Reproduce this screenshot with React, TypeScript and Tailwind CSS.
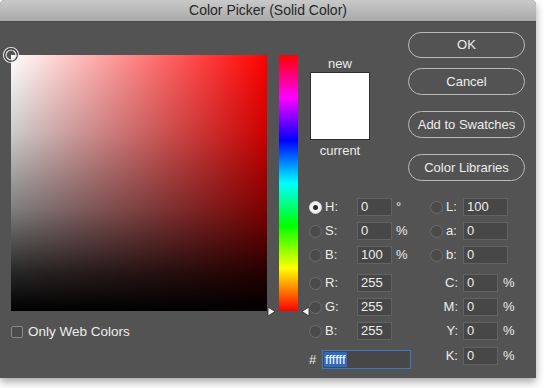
import React from 'react'

const font = { fontFamily: '"Liberation Sans", Arial, sans-serif' }

function Radio({ on }: { on?: boolean }) {
  return on ? (
    <span className="flex w-[13px] h-[13px] shrink-0 items-center justify-center rounded-full bg-[#f0f0f0] border border-[#d8d8d8]">
      <span className="w-[5px] h-[5px] rounded-full bg-[#2a2a2a]" />
    </span>
  ) : (
    <span className="block w-[13px] h-[13px] shrink-0 rounded-full bg-[#4b4b4b] border border-[#6c6c6c]" />
  )
}

function Field({ value, w }: { value: string; w: string }) {
  return (
    <div className={`${w} h-[18px] shrink-0 bg-[#474747] border border-[#626262] pl-[3px] text-[13px] leading-[16px] text-[#ececec]`}>
      {value}
    </div>
  )
}

function Btn({ label, h, mt }: { label: string; h: string; mt: string }) {
  return (
    <div className={`${h} ${mt} w-[117px] flex items-center justify-center rounded-full border border-[#b9b9b9] text-[13px] text-[#ededed]`}>
      {label}
    </div>
  )
}

// left part of a fields row: radio + label + input + unit
function LeftCell({ on, label, value, unit }: { on?: boolean; label: string; value: string; unit: string }) {
  return (
    <div className="flex items-center w-[121px]">
      <Radio on={on} />
      <span className="ml-[3px] w-[32px] text-[13px] text-[#ececec]">{label}</span>
      <Field value={value} w="w-[35px]" />
      <span className="ml-[4px] text-[13px] text-[#ececec]">{unit}</span>
    </div>
  )
}

function LabCell({ label, value }: { label: string; value: string }) {
  return (
    <div className="flex items-center">
      <Radio />
      <span className="ml-[3px] w-[17px] text-[13px] text-[#ececec]">{label}</span>
      <Field value={value} w="w-[45px]" />
    </div>
  )
}

function CmykCell({ label, value }: { label: string; value: string }) {
  return (
    <div className="flex items-center">
      <span className="w-[33px] pr-[5px] text-right text-[13px] text-[#ececec]">{label}</span>
      <Field value={value} w="w-[35px]" />
      <span className="ml-[5px] text-[13px] text-[#ececec]">%</span>
    </div>
  )
}

export default function App() {
  return (
    <div className="w-[544px] h-[388px] bg-white overflow-hidden" style={font}>
      <div className="w-[536px] h-[378px] bg-[#535353] rounded-t-[5px] flex flex-col shadow-[0_4px_8px_rgba(0,0,0,0.35)]">
        {/* title bar */}
        <div className="h-[22px] rounded-t-[5px] bg-[linear-gradient(to_bottom,#c9c9c9,#a9a9a9)] border-b border-[#4a4a4a] flex items-center justify-center text-[14px] text-[#262626]">
          Color Picker (Solid Color)
        </div>

        <div className="flex flex-1">
          {/* color field */}
          <div className="pl-[11px] pt-[33px] w-[267px] shrink-0">
            <div className="relative w-[256px] h-[256px] bg-[linear-gradient(to_bottom,transparent_0%,rgba(0,0,0,0.2)_30%,rgba(0,0,0,0.5)_60%,rgba(0,0,0,0.85)_85%,#000_100%),linear-gradient(to_right,#fff,#f00)]">
              <svg className="absolute -left-[9px] -top-[9px]" width="18" height="18" viewBox="0 0 18 18">
                <circle cx="9" cy="9" r="7.5" fill="none" stroke="#e6e6e6" strokeWidth="1.2" />
                <circle cx="9" cy="9" r="6.2" fill="none" stroke="#333" strokeWidth="1.2" />
                <circle cx="9" cy="9" r="5" fill="none" stroke="#e6e6e6" strokeWidth="1.2" />
              </svg>
            </div>
            <div className="flex items-center mt-[11px]">
              <span className="w-[12px] h-[12px] rounded-[2px] bg-[#4b4b4b] border border-[#8a8a8a]" />
              <span className="ml-[5px] text-[13.5px] text-[#ececec]">Only Web Colors</span>
            </div>
          </div>

          {/* hue slider */}
          <div className="ml-[12px] pt-[33px] shrink-0">
            <div className="relative w-[19px] h-[256px] bg-[linear-gradient(to_bottom,#f00,#f0f,#00f,#0ff,#0f0,#ff0,#f00)]">
              <svg className="absolute -left-[12px] bottom-[-6px]" width="9" height="11" viewBox="0 0 9 11">
                <path d="M1 1 L8 5.5 L1 10 Z" fill="#f2f2f2" stroke="#2a2a2a" strokeWidth="0.8" strokeLinejoin="round" />
              </svg>
              <svg className="absolute -right-[12px] bottom-[-6px]" width="9" height="11" viewBox="0 0 9 11">
                <path d="M8 1 L1 5.5 L8 10 Z" fill="#f2f2f2" stroke="#2a2a2a" strokeWidth="0.8" strokeLinejoin="round" />
              </svg>
            </div>
          </div>

          {/* right side */}
          <div className="flex flex-col flex-1">
            <div className="flex h-[176px]">
              <div className="ml-[12px] pt-[34px] w-[60px] flex flex-col items-center">
                <span className="text-[13px] leading-[16px] text-[#ececec]">new</span>
                <div className="w-[60px] h-[68px] bg-white border border-[#2e2e2e]" />
                <span className="mt-[3px] text-[13px] leading-[16px] text-[#ececec]">current</span>
              </div>
              <div className="ml-[38px] pt-[10px] flex flex-col">
                <Btn label="OK" h="h-[26px]" mt="mt-0" />
                <Btn label="Cancel" h="h-[27px]" mt="mt-[10px]" />
                <Btn label="Add to Swatches" h="h-[27px]" mt="mt-[16px]" />
                <Btn label="Color Libraries" h="h-[27px]" mt="mt-[16px]" />
              </div>
            </div>

            {/* fields */}
            <div className="pl-[11px] flex flex-col">
              <div className="flex items-center h-[18px]">
                <LeftCell on label="H:" value="0" unit="°" />
                <LabCell label="L:" value="100" />
              </div>
              <div className="flex items-center h-[18px] mt-[6px]">
                <LeftCell label="S:" value="0" unit="%" />
                <LabCell label="a:" value="0" />
              </div>
              <div className="flex items-center h-[18px] mt-[6px]">
                <LeftCell label="B:" value="100" unit="%" />
                <LabCell label="b:" value="0" />
              </div>
              <div className="flex items-center h-[18px] mt-[10px]">
                <LeftCell label="R:" value="255" unit="" />
                <CmykCell label="C:" value="0" />
              </div>
              <div className="flex items-center h-[18px] mt-[6px]">
                <LeftCell label="G:" value="255" unit="" />
                <CmykCell label="M:" value="0" />
              </div>
              <div className="flex items-center h-[18px] mt-[6px]">
                <LeftCell label="B:" value="255" unit="" />
                <CmykCell label="Y:" value="0" />
              </div>
              <div className="flex items-start h-[22px] mt-[6px]">
                <div className="flex items-center w-[121px] mt-[4px]">
                  <span className="w-[13px] text-[13px] text-[#ececec]">#</span>
                  <div className="w-[89px] h-[19px] border-[1.5px] border-[#3b78c8] bg-[#474747] flex items-center pl-[1px]">
                    <span className="bg-[#2e6bc0] text-white text-[13px] leading-[15px] px-[1px]">ffffff</span>
                  </div>
                </div>
                <CmykCell label="K:" value="0" />
              </div>
            </div>
          </div>
        </div>
      </div>
    </div>
  )
}
